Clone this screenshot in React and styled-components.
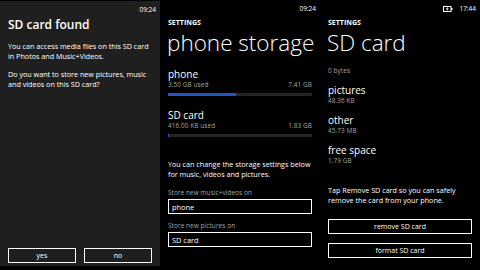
import React from 'react';
import styled, { createGlobalStyle } from 'styled-components';

const GlobalStyle = createGlobalStyle`
  html, body {
    margin: 0;
    padding: 0;
    background: #000;
    width: 480px;
    height: 270px;
    overflow: hidden;
  }
  * {
    box-sizing: border-box;
  }
`;

const Screens = styled.div`
  display: grid;
  grid-template-columns: 160px 160px 160px;
  width: 480px;
  height: 270px;
  background: #000;
  color: #fff;
  font-family: "Open Sans", "Noto Sans", sans-serif;
`;

const Phone = styled.div`
  display: flex;
  flex-direction: column;
  padding: 0 8px;
  background: ${p => (p.$dialog ? '#1f1f1f' : '#000')};
  margin: ${p => (p.$dialog ? '1px 0 4px 0' : '0')};
`;

const StatusBar = styled.div`
  display: flex;
  justify-content: flex-end;
  align-items: center;
  gap: 6px;
  height: 16px;
  padding: 2px 0 0;
  margin-right: -4px;
  font-size: 6.5px;
  line-height: 8px;
  color: #fff;
`;

const DialogTitle = styled.h1`
  margin: 1px 0 0;
  font-size: 12px;
  line-height: 14px;
  font-weight: 600;
`;

const Paragraph = styled.p`
  margin: ${p => p.$top || 0}px 0 0;
  font-size: 7.2px;
  line-height: 9.5px;
  color: #fff;
  white-space: nowrap;
`;

const Spacer = styled.div`
  flex: 1;
`;

const ButtonRow = styled.div`
  display: grid;
  grid-template-columns: 1fr 1fr;
  gap: 8px;
  margin-bottom: 3px;
`;

const OutlineButton = styled.div`
  display: flex;
  align-items: center;
  justify-content: center;
  height: 15px;
  border: 1px solid #fff;
  font-size: 7px;
  color: #fff;
  margin-top: ${p => p.$top || 0}px;
`;

const Section = styled.div`
  font-size: 7px;
  line-height: 8px;
  font-weight: 700;
  margin-top: 3px;
`;

const PageTitle = styled.h1`
  margin: 3px 0 0 -1px;
  font-size: 22.5px;
  line-height: 26px;
  font-weight: 300;
  white-space: nowrap;
`;

const ItemName = styled.div`
  margin-top: ${p => p.$top || 0}px;
  font-size: 10px;
  line-height: 13px;
  font-weight: 400;
`;

const Meta = styled.div`
  display: flex;
  justify-content: space-between;
  font-size: 6.4px;
  line-height: 8px;
  letter-spacing: 0.1px;
  color: #a6a6a6;
`;

const Bar = styled.div`
  height: 3px;
  margin-top: 4px;
  background: #262626;
`;

const Fill = styled.div`
  height: 100%;
  background: #2653c7;
`;

const Label = styled.div`
  margin-top: ${p => p.$top || 0}px;
  font-size: 6.4px;
  line-height: 8px;
  letter-spacing: 0.1px;
  color: #a6a6a6;
`;

const Picker = styled.div`
  display: flex;
  align-items: center;
  height: 15px;
  margin-top: 2px;
  padding: 0 3px;
  border: 1px solid #fff;
  font-size: 7.4px;
`;

function Battery() {
  return (
    <svg width="10" height="6" viewBox="0 0 10 6">
      <rect x="0.5" y="0.5" width="7.5" height="5" fill="none" stroke="#fff" strokeWidth="1" />
      <rect x="8" y="2" width="1.5" height="2" fill="#fff" />
      <path d="M4.6 0.5 L2.6 3.2 H4.2 L3.6 5.5 L5.8 2.6 H4.2 Z" fill="#fff" />
    </svg>
  );
}

function DialogScreen() {
  return (
    <Phone $dialog>
      <StatusBar>09:24</StatusBar>
      <DialogTitle>SD card found</DialogTitle>
      <Paragraph $top={10}>
        You can access media files on this SD card<br />in Photos and Music+Videos.
      </Paragraph>
      <Paragraph $top={9}>
        Do you want to store new pictures, music<br />and videos on this SD card?
      </Paragraph>
      <Spacer />
      <ButtonRow>
        <OutlineButton>yes</OutlineButton>
        <OutlineButton>no</OutlineButton>
      </ButtonRow>
    </Phone>
  );
}

function StorageScreen() {
  return (
    <Phone>
      <StatusBar>09:24</StatusBar>
      <Section>SETTINGS</Section>
      <PageTitle>phone storage</PageTitle>
      <ItemName $top={12}>phone</ItemName>
      <Meta><span>3.50 GB used</span><span>7.41 GB</span></Meta>
      <Bar><Fill style={{ width: `${(3.5 / 7.41) * 100}%` }} /></Bar>
      <ItemName $top={13}>SD card</ItemName>
      <Meta><span>416.00 KB used</span><span>1.83 GB</span></Meta>
      <Bar><Fill style={{ width: '0.2%' }} /></Bar>
      <Paragraph $top={23}>
        You can change the storage settings below<br />for music, videos and pictures.
      </Paragraph>
      <Label $top={10}>Store new music+videos on</Label>
      <Picker>phone</Picker>
      <Label $top={8}>Store new pictures on</Label>
      <Picker>SD card</Picker>
    </Phone>
  );
}

function CardScreen() {
  return (
    <Phone>
      <StatusBar><Battery />17:44</StatusBar>
      <Section>SETTINGS</Section>
      <PageTitle>SD card</PageTitle>
      <Label $top={11}>0 bytes</Label>
      <ItemName $top={9}>pictures</ItemName>
      <Label>48.36 KB</Label>
      <ItemName $top={9}>other</ItemName>
      <Label>45.73 MB</Label>
      <ItemName $top={9}>free space</ItemName>
      <Label>1.79 GB</Label>
      <Paragraph $top={21}>
        Tap Remove SD card so you can safely<br />remove the card from your phone.
      </Paragraph>
      <OutlineButton $top={14}>remove SD card</OutlineButton>
      <OutlineButton $top={9}>format SD card</OutlineButton>
    </Phone>
  );
}

export default function App() {
  return (
    <>
      <GlobalStyle />
      <Screens>
        <DialogScreen />
        <StorageScreen />
        <CardScreen />
      </Screens>
    </>
  );
}
